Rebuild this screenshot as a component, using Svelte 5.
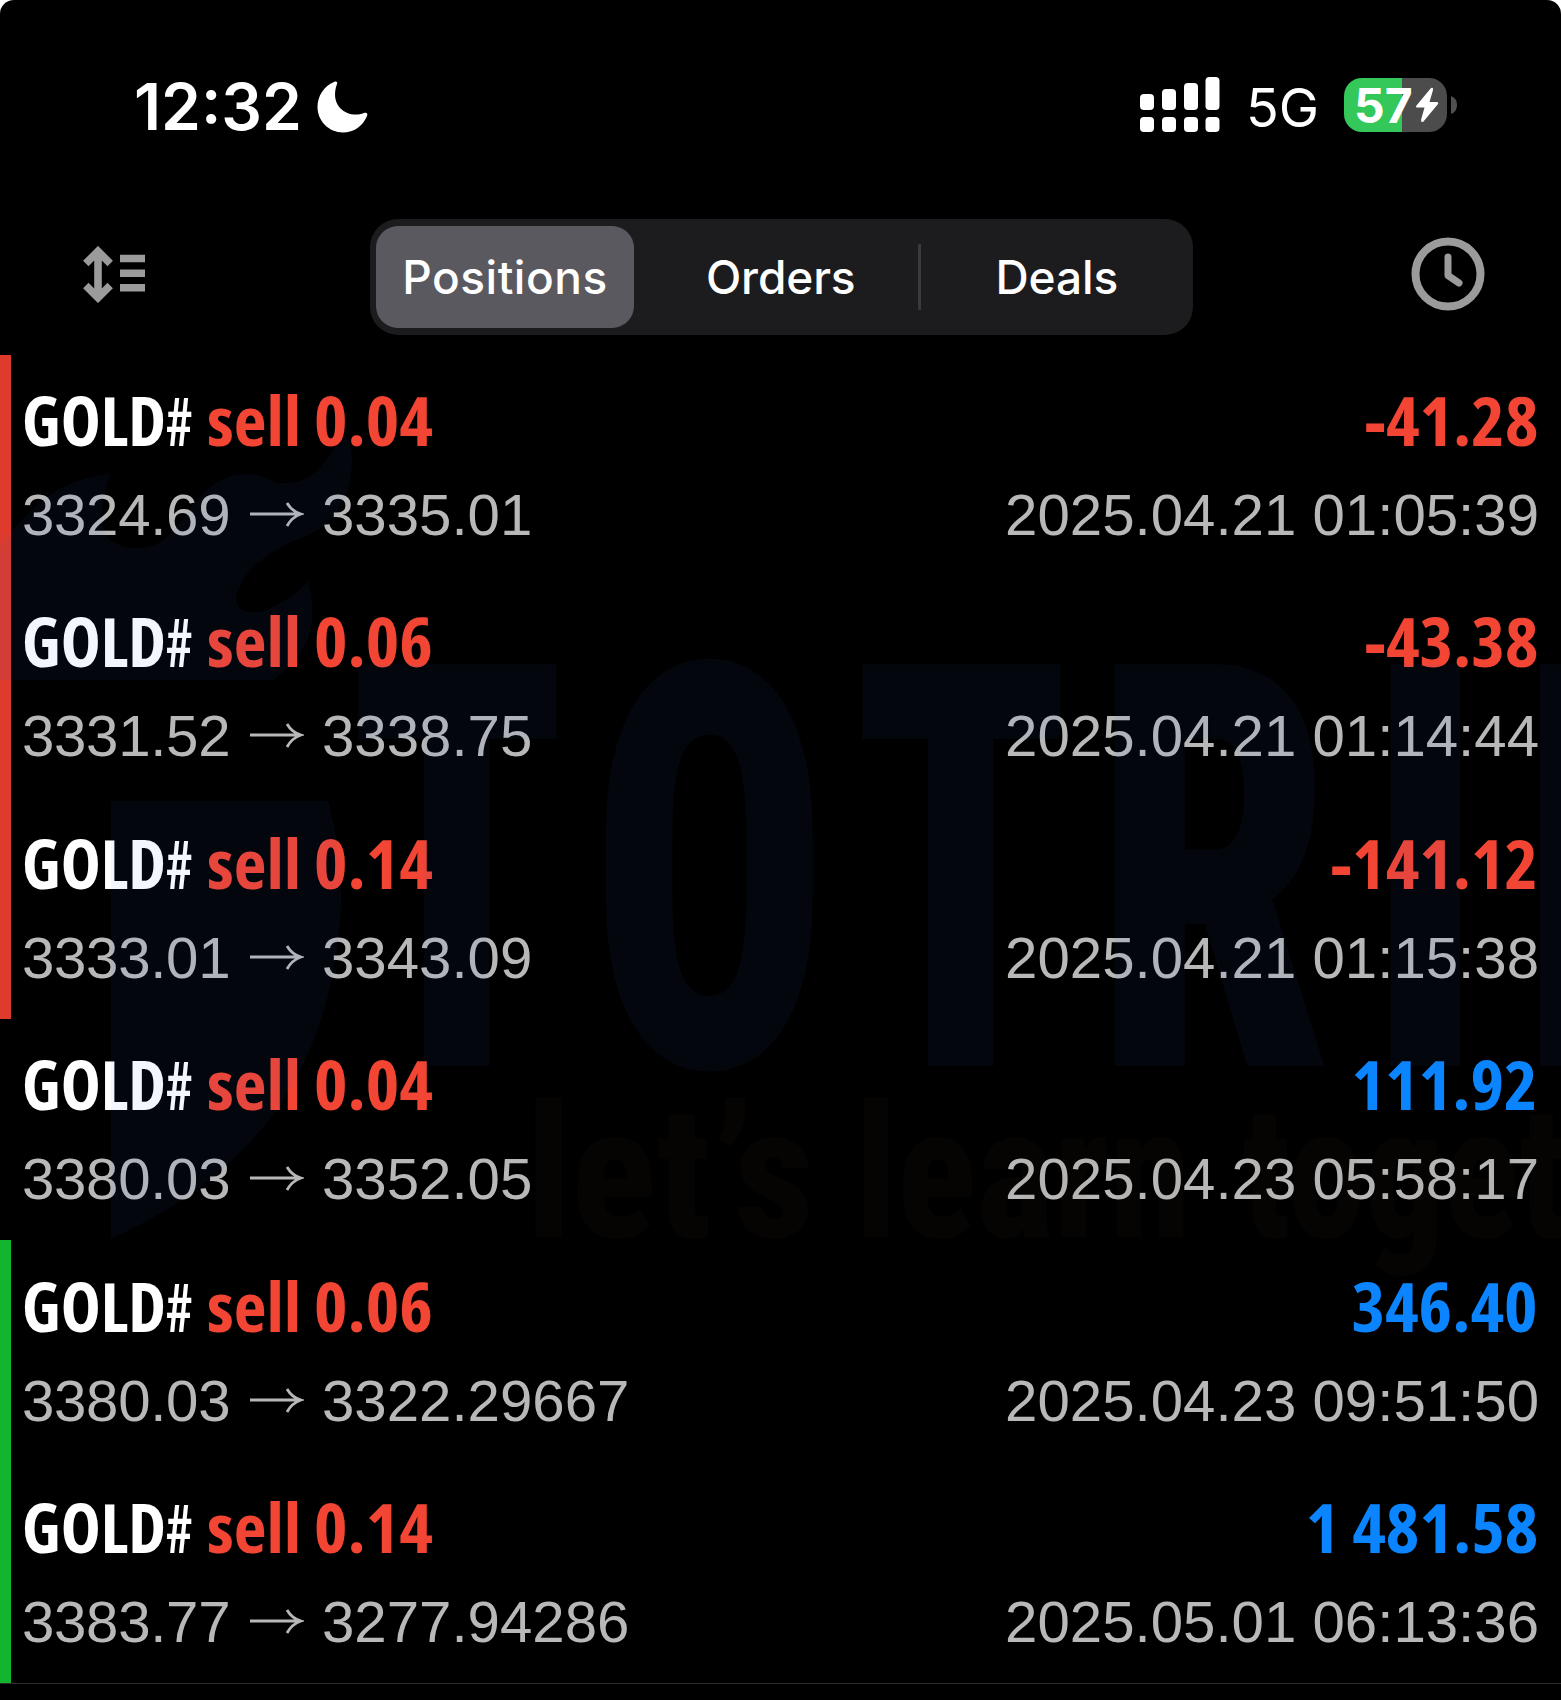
<script>
    const tabs = ["Positions", "Orders", "Deals"];
    let active = "Positions";

    const positions = [
        { symbol: "GOLD", suffix: "#", side: "sell", volume: "0.04", open: "3324.69", close: "3335.01", time: "2025.04.21 01:05:39", profit: "-41.28", mark: "sl" },
        { symbol: "GOLD", suffix: "#", side: "sell", volume: "0.06", open: "3331.52", close: "3338.75", time: "2025.04.21 01:14:44", profit: "-43.38", mark: "sl" },
        { symbol: "GOLD", suffix: "#", side: "sell", volume: "0.14", open: "3333.01", close: "3343.09", time: "2025.04.21 01:15:38", profit: "-141.12", mark: "sl" },
        { symbol: "GOLD", suffix: "#", side: "sell", volume: "0.04", open: "3380.03", close: "3352.05", time: "2025.04.23 05:58:17", profit: "111.92", mark: "" },
        { symbol: "GOLD", suffix: "#", side: "sell", volume: "0.06", open: "3380.03", close: "3322.29667", time: "2025.04.23 09:51:50", profit: "346.40", mark: "tp" },
        { symbol: "GOLD", suffix: "#", side: "sell", volume: "0.14", open: "3383.77", close: "3277.94286", time: "2025.05.01 06:13:36", profit: "1 481.58", mark: "tp" },
    ];
</script>

<div class="screen">
    <header class="statusBar">
        <div class="clock">
            <span class="time">12:32</span>
            <svg class="moon" width="51" height="52" viewBox="0 0 51 52">
                <path d="M17 1C19 0 21 1 20 3C17 11 17 20 23 27C30 34 39 35 47 32C50 31 51 33 50 35C46 45 37 51.500 26 51.500C12 51.500 0.500 40 0.500 26C0.500 15 7 5 17 1Z" fill="#fff" />
            </svg>
        </div>
        <div class="indicators">
            <svg class="signal" width="80" height="56" viewBox="0 0 80 56" fill="#fff">
                <rect x="0" y="17" width="14" height="16" rx="4" />
                <rect x="22" y="12" width="14" height="21" rx="4" />
                <rect x="44" y="6" width="14" height="27" rx="4" />
                <rect x="65.500" y="0" width="14" height="33" rx="4" />
                <rect x="0" y="40" width="14" height="15" rx="4" />
                <rect x="22" y="40" width="14" height="15" rx="4" />
                <rect x="44" y="40" width="14" height="15" rx="4" />
                <rect x="65.500" y="40" width="14" height="15" rx="4" />
            </svg>
            <span class="network">5G</span>
            <div class="battery">
                <span>57</span>
                <svg width="24" height="36" viewBox="0 0 24 36">
                    <path d="M16 1L1.500 18.500Q0 20.500 2.500 20.500H9.500L6 33Q6 36 8.500 34.500L23 17Q24 15 21.500 15H14.500L18 3Q18.500 0 16 1Z" fill="#fff" />
                </svg>
            </div>
            <svg class="batteryTip" width="6" height="18" viewBox="0 0 6 18">
                <path d="M0 0Q6 2.500 6 9T0 18Z" fill="#505050" />
            </svg>
        </div>
    </header>

    <nav class="toolbar">
        <svg class="icon" width="62" height="57" viewBox="0 0 62 57">
            <path d="M2.800 17.500L15 5.300L27.200 17.500M15 5V52M2.800 39.500L15 51.700L27.200 39.500" fill="none" stroke="#9b9b9b" stroke-width="7.600" />
            <path d="M37 12.500H62M37 27.200H62M37 41.700H62" stroke="#9b9b9b" stroke-width="7.500" />
        </svg>
        <div class="segments">
            {#each tabs as tab}
                <button type="button" class:selected={tab === active} on:click={() => (active = tab)}>{tab}</button>
            {/each}
        </div>
        <svg class="icon" width="74" height="74" viewBox="0 0 74 74" fill="none" stroke="#9b9b9b">
            <circle cx="37" cy="37" r="32.500" stroke-width="8" />
            <path d="M37 20V38.500L48 46" stroke-width="7" stroke-linecap="round" stroke-linejoin="round" />
        </svg>
    </nav>

    <main>
        {#each positions as position}
            <article class={position.mark}>
                <div class="summary">
                    <strong class="symbol">{position.symbol}<span>{position.suffix}</span></strong>
                    <span class="side">{position.side} {position.volume}</span>
                    <span class="profit" class:loss={position.profit.startsWith("-")}>{position.profit}</span>
                </div>
                <div class="details">
                    <span class="open">{position.open}</span>
                    <svg width="54" height="30" viewBox="0 0 54 30">
                        <path d="M0 14H50M37 3Q42 11.500 51 14Q42 17 37 26" fill="none" stroke="#b8b8b8" stroke-width="2.800" />
                    </svg>
                    <span>{position.close}</span>
                    <time>{position.time}</time>
                </div>
            </article>
        {/each}
    </main>

    <svg class="watermark" width="1561" height="1700" viewBox="0 0 1561 1700" aria-hidden="true">
        <g class="brand">
            <path d="M0 546C35 500 65 478 110 474C105 490 96 520 108 538C122 551 147 552 163 540C190 520 200 474 249 474C265 474 270 485 290 483C325 478 330 447 345 436C352 440 353 457 351 475C346 505 330 527 306 536C270 550 240 570 236 600C238 614 255 614 266 610C285 602 302 590 308 580C318 620 312 654 273 680H0Z" />
            <path d="M111 801H328C340 845 345 890 338 940C320 1090 240 1180 111 1239Z" />
            <text x="349" y="1066" textLength="217" lengthAdjust="spacingAndGlyphs">T</text>
            <text x="591" y="1066" textLength="237" lengthAdjust="spacingAndGlyphs">O</text>
            <text x="853" y="1066" textLength="217" lengthAdjust="spacingAndGlyphs">T</text>
            <text x="1094" y="1066" textLength="239" lengthAdjust="spacingAndGlyphs">R</text>
            <text x="1367" y="1066" textLength="117" lengthAdjust="spacingAndGlyphs">I</text>
            <text x="1521" y="1066" textLength="240" lengthAdjust="spacingAndGlyphs">N</text>
        </g>
        <g class="tagline">
            <text x="526" y="1237" textLength="288" lengthAdjust="spacingAndGlyphs">let’s</text>
            <text x="855" y="1237" textLength="336" lengthAdjust="spacingAndGlyphs">learn</text>
            <text x="1242" y="1237" textLength="530" lengthAdjust="spacingAndGlyphs">together</text>
        </g>
    </svg>
</div>

<style>
    :global(body) {
        margin: 0;
        background: #fff;
    }

    .screen {
        position: relative;
        box-sizing: border-box;
        width: 1561px;
        height: 1700px;
        overflow: hidden;
        background: #000;
        border-radius: 14px 14px 0 0;
        color: #fff;
        font-family: "Liberation Sans", sans-serif;
    }

    svg {
        display: block;
        flex: none;
    }

    .statusBar {
        height: 219px;
        box-sizing: border-box;
        padding: 77px 104px 0 134px;
        display: flex;
        justify-content: space-between;
        align-items: flex-start;
        font-family: Inter, sans-serif;
    }

    .clock,
    .indicators {
        height: 56px;
        display: flex;
        align-items: center;
    }

    .time {
        width: 183px;
        padding-top: 4px;
        font-size: 64px;
        font-weight: 600;
        line-height: 56px;
    }

    .moon {
        margin-top: 4px;
    }

    .network {
        width: 76px;
        margin-left: 26px;
        padding-top: 6px;
        font-size: 54px;
        line-height: 56px;
    }

    .battery {
        width: 103px;
        height: 54px;
        box-sizing: border-box;
        margin: 0 4px 0 22px;
        padding: 0 8px 0 10px;
        display: flex;
        align-items: center;
        justify-content: space-between;
        border-radius: 18px;
        background: linear-gradient(90deg, #34c759 58px, #4c4c4c 58px);
        font-size: 48px;
        font-weight: 700;
        line-height: 56px;
    }

    .battery span {
        padding-top: 2px;
    }

    .toolbar {
        height: 116px;
        padding: 0 76px 0 83px;
        display: flex;
        align-items: center;
        justify-content: space-between;
    }

    .icon {
        margin-bottom: 6px;
    }

    .segments {
        width: 823px;
        height: 116px;
        box-sizing: border-box;
        padding: 7px 0 7px 6px;
        margin-left: 7px;
        display: grid;
        grid-template-columns: 258px 283.5px 275.5px;
        border-radius: 28px;
        background: #1c1c1e;
    }

    .segments button {
        border: 0;
        padding: 0;
        background: none;
        border-radius: 22px;
        color: #fff;
        font-family: Inter, sans-serif;
        font-size: 46px;
        font-weight: 450;
        letter-spacing: -0.1px;
    }

    .segments button.selected {
        background: #5b5960;
        font-weight: 500;
        letter-spacing: 0.5px;
    }

    .segments button:nth-child(2) {
        padding-left: 10px;
    }

    .segments button:last-child {
        padding-left: 3px;
        background: linear-gradient(#3a3a3f, #3a3a3f) left center / 3px 66px no-repeat;
    }

    main {
        margin-top: 19.5px;
        border-bottom: 1px solid #2b2b2b;
    }

    article {
        height: 221.4px;
        box-sizing: border-box;
        padding: 22.5px 22px 0 11px;
        border-left: 11px solid transparent;
    }

    article.sl {
        border-color: #df3b2c;
    }

    article.tp {
        border-color: #13b42e;
    }

    .summary {
        height: 86px;
        display: flex;
        align-items: center;
        font-family: "Open Sans", sans-serif;
        font-size: 67.5px;
        font-weight: 660;
        font-stretch: 75%;
        line-height: 86px;
        white-space: pre;
    }

    .symbol {
        width: 185px;
        font-weight: 680;
    }

    .symbol span {
        display: inline-block;
        font-weight: 600;
        transform: scaleX(0.8);
        transform-origin: left;
    }

    .side {
        color: #f34534;
        transform: scaleX(1.06);
        transform-origin: left;
    }

    .profit {
        margin: 0 1px 0 auto;
        color: #0a84ff;
        transform: scaleX(1.06);
        transform-origin: right;
    }

    .profit.loss {
        color: #f34534;
    }

    .details {
        height: 76px;
        margin-top: 14px;
        display: flex;
        align-items: center;
        color: #b8b8b8;
        font-size: 58.2px;
        line-height: 76px;
    }

    .open {
        width: 228px;
        letter-spacing: -0.3px;
    }

    .details svg {
        margin-right: 18px;
    }

    time {
        margin-left: auto;
    }

    .watermark {
        position: absolute;
        top: 0;
        left: 0;
        pointer-events: none;
        font-family: Roboto, sans-serif;
        font-stretch: 75%;
    }

    .brand {
        fill: rgba(50, 105, 200, 0.06);
        font-size: 565px;
        font-weight: 900;
    }

    .tagline {
        fill: rgba(150, 110, 85, 0.038);
        font-size: 186px;
        font-weight: 800;
    }
</style>
